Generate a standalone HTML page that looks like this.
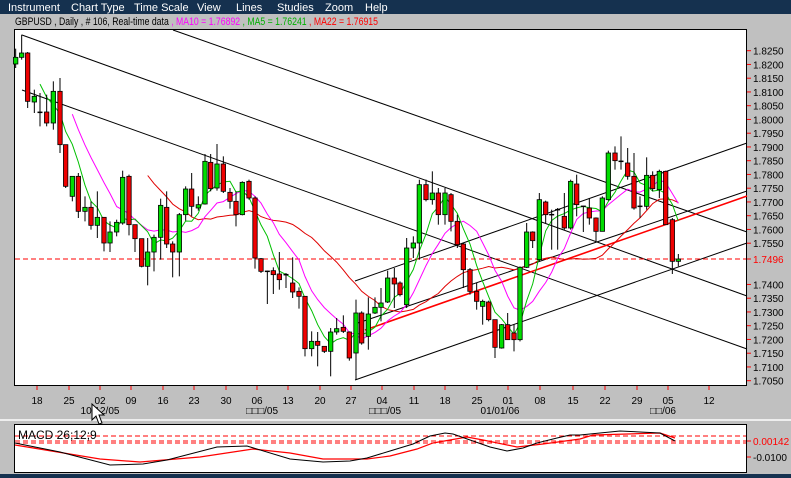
<!DOCTYPE html>
<html><head><meta charset="utf-8"><style>
body{margin:0;width:791px;height:478px;overflow:hidden;background:#c0c0c0;}
svg{display:block}
text{font-family:"Liberation Sans",sans-serif;}
</style></head><body>
<svg id="s" width="791" height="478" xmlns="http://www.w3.org/2000/svg">
<rect x="0" y="0" width="791" height="14" fill="#15314f"/>
<g fill="#fff" font-size="11">
<text x="8" y="11">Instrument</text><text x="71" y="11">Chart Type</text><text x="134" y="11">Time Scale</text><text x="197" y="11">View</text><text x="236" y="11">Lines</text><text x="277" y="11">Studies</text><text x="325" y="11">Zoom</text><text x="365" y="11">Help</text>
</g>
<text x="15" y="25" font-size="11" textLength="363" lengthAdjust="spacingAndGlyphs"><tspan fill="#000">GBPUSD , Daily , # 106, Real-time data </tspan><tspan fill="#ff00ff">, MA10 = 1.76892 </tspan><tspan fill="#00b000">, MA5 = 1.76241 </tspan><tspan fill="#ff0000">, MA22 = 1.76915</tspan></text>
<rect x="14.5" y="29.5" width="732" height="356" fill="#fff" stroke="#000"/>
<g id="ax" font-size="10" fill="#000"></g>
<rect x="0" y="419" width="791" height="2" fill="#eee"/>
<rect x="14.5" y="424.5" width="732" height="48" fill="#fff" stroke="#000"/>
<rect x="0" y="474" width="791" height="4" fill="#15314f"/>
<g id="ch"></g>
<g id="macd"></g>
<path d="M92 404 L92 420 L96 416 L99 424 L102 423 L99 415 L104 415 Z" fill="#fff" stroke="#000" stroke-width="1"/>
</svg>
<script>
var NS="http://www.w3.org/2000/svg";
function el(p,t,a,txt){var e=document.createElementNS(NS,t);for(var k in a)e.setAttribute(k,a[k]);if(txt!=null)e.textContent=txt;document.getElementById(p).appendChild(e);return e;}
var labs=["1.8250","1.8200","1.8150","1.8100","1.8050","1.8000","1.7950","1.7900","1.7850","1.7800","1.7750","1.7700","1.7650","1.7600","1.7550"];
for(var i=0;i<labs.length;i++){var y=50.7+i*13.75;el("ax","line",{x1:747,x2:751,y1:y,y2:y,stroke:"#f00"});el("ax","text",{x:753,y:y+4},labs[i]);}
var low=["1.7400","1.7350","1.7300","1.7250","1.7200","1.7150","1.7100","1.7050"];
for(var i=0;i<low.length;i++){var y=50.7+(i+17)*13.75;el("ax","line",{x1:747,x2:751,y1:y,y2:y,stroke:"#f00"});el("ax","text",{x:753,y:y+4},low[i]);}
el("ax","line",{x1:747,x2:751,y1:259,y2:259,stroke:"#f00"});
el("ax","text",{x:753,y:263,fill:"#f00"},"1.7496");
var xs=[[37,"18"],[69,"25"],[100,"02"],[131,"09"],[163,"16"],[194,"23"],[226,"30"],[257,"06"],[288,"13"],[320,"20"],[351,"27"],[382,"04"],[414,"11"],[445,"18"],[477,"25"],[508,"01"],[540,"08"],[573,"15"],[605,"22"],[637,"29"],[668,"05"],[709,"12"]];
xs.forEach(function(a){el("ax","line",{x1:a[0],x2:a[0],y1:386,y2:390,stroke:"#f00"});el("ax","text",{x:a[0],y:404,"text-anchor":"middle"},a[1]);});
[[100,"10/12/05"],[262,"□□□/05"],[385,"□□□/05"],[500,"01/01/06"],[663,"□□/06"]].forEach(function(a){el("ax","text",{x:a[0],y:414,"text-anchor":"middle"},a[1]);});
el("ax","text",{x:753,y:445,fill:"#f00"},"0.00142");
el("ax","line",{x1:747,x2:751,y1:441,y2:441,stroke:"#f00"});
el("ax","text",{x:753,y:461},"-0.0100");
el("ax","line",{x1:747,x2:751,y1:457,y2:457,stroke:"#f00"});
var L=[[173,30,747,232,"#000"],[22,35,747,296,"#000"],[22,90,747,349,"#000"],[355,380,747,243,"#000"],[355,281,747,143,"#000"],[355,324,747,191,"#000"]];
L.forEach(function(l){el("ch","line",{x1:l[0],y1:l[1],x2:l[2],y2:l[3],stroke:l[4],"stroke-width":1});});
el("ch","line",{x1:365,y1:330,x2:747,y2:196,stroke:"#f00","stroke-width":1.6});
el("ch","line",{x1:15,y1:259,x2:746,y2:259,stroke:"#f00","stroke-dasharray":"5,3"});
var A=[[47,88,108,62,120,"g"],[65,75,88,20,95,"g"],[83,75,220,72,240,"r"],[103,205,222,185,255,"g"],[120,252,254,195,295,"d"],[140,252,285,200,295,"r"],[160,190,285,160,305,"g"],[180,190,350,150,375,"r"],[197,350,475,350,480,"r"],[217,445,505,445,520,"g"],[235,445,550,435,570,"r"],[255,538,550,505,580,"g"],[273,538,592,520,605,"r"],[292,568,592,490,630,"g"],[312,568,645,568,670,"r"],[330,612,645,580,672,"g"],[350,583,612,575,625,"g"],[368,448,585,428,590,"g"],[387,445,590,440,622,"r"],[405,590,632,590,672,"r"],[425,632,715,632,718,"r"],[443,672,715,630,772,"g"],[462,628,672,620,730,"g"],[482,532,628,512,695,"g"],[500,538,648,490,660,"r"],[518,648,672,640,748,"r"],[538,560,672,555,745,"g"],[557,483,560,475,578,"g"],[575,483,535,435,565,"r"],[595,530,540,505,548,"g"],[615,400,528,378,530,"g"],[632,403,482,378,490,"r"],[651,408,480,348,488,"g"],[670,408,490,385,495,"r"],[690,493,520,480,542,"r"],[708,520,560,490,595,"r"],[727,463,560,460,562,"g"],[747,460,510,455,515,"r"],[765,510,690,505,722,"r"],[783,692,730,690,735,"r"],[802,729,731,728,828,"d"],[820,728,740,718,798,"r"],[838,738,755,672,785,"r"],[858,739,741,735,780,"d"],[878,765,792,688,810,"r"],[897,790,805,778,842,"r"],[915,805,962,805,985,"r"],[935,940,962,910,985,"g"],[953,940,952,912,1015,"r"],[973,955,970,955,975,"r"],[992,912,970,900,1045,"g"],[1010,902,912,870,920,"g"],[1030,898,910,862,915,"r"],[1048,912,990,910,998,"r"],[1068,855,975,815,1055,"g"],[1085,855,945,850,950,"r"],[1105,858,925,808,965,"g"],[1125,838,855,808,858,"g"],[1143,825,838,780,880,"g"],[1163,750,822,728,825,"g"],[1183,750,768,720,840,"r"]];
var C=[];
A.forEach(function(a){C.push([a[0]/3,a[1]/3+28,a[2]/3+28,a[3]/3+28,a[4]/3+28,a[5]]);});
var B=[[0,765,800,760,805,"r"],[20,660,830,630,840,"g"],[40,645,660,625,690,"g"],[58,470,645,455,695,"g"],[78,470,515,455,520,"r"],[97,495,515,430,530,"g"],[115,495,560,480,590,"r"],[135,495,560,480,590,"g"],[153,500,580,495,610,"r"],[172,580,650,560,660,"r"],[190,648,725,645,780,"r"],[210,725,790,720,800,"r"],[230,790,820,765,845,"r"],[248,820,835,815,890,"g"],[266,822,875,818,880,"r"],[285,875,958,875,990,"r"],[305,890,960,888,962,"g"],[323,890,935,855,935,"r"],[342,915,935,888,970,"r"],[360,718,935,715,940,"g"],[380,612,718,585,720,"g"],[398,612,638,610,660,"r"],[418,515,695,495,700,"g"],[437,522,560,518,585,"r"],[455,558,562,545,665,"d"],[473,543,547,540,665,"d"],[493,565,600,495,605,"r"],[512,460,600,455,605,"g"],[530,468,530,440,565,"r"],[550,533,537,535,612,"d"],[568,540,570,510,590,"r"],[588,570,610,568,640,"r"],[607,510,610,505,610,"g"],[625,375,515,368,518,"g"],[645,375,398,355,425,"r"],[663,398,402,325,425,"d"],[683,405,445,360,455,"r"],[702,445,540,375,545,"r"],[720,533,537,505,570,"d"],[740,442,535,388,545,"g"],[758,442,482,430,490,"r"],[778,430,485,425,510,"g"],[797,430,590,428,590,"r"],[817,575,700,570,738,"r"],[835,693,700,678,715,"g"]];
B.forEach(function(a){C.push([a[0]/3+400,a[1]/3+28,a[2]/3+28,a[3]/3+28,a[4]/3+28,a[5]]);});
C.sort(function(a,b){return a[0]-b[0];});
var cl=C.map(function(c){return c[5]=="g"?c[1]:c[2];});
function ma(n,col,st){var pts=[];for(var i=n-1;i<C.length;i++){var s=0;for(var j=i-n+1;j<=i;j++)s+=cl[j];pts.push(C[i][0].toFixed(1)+","+(s/n).toFixed(1));}el("ch","polyline",{points:pts.join(" "),fill:"none",stroke:col,"stroke-width":st});}
ma(22,"#e00000",1);ma(10,"#ff00ff",1);ma(5,"#00c000",1);
C.forEach(function(c){var x=c[0];el("ch","line",{x1:x,x2:x,y1:c[3],y2:c[4],stroke:"#000"});
 if(c[5]=="d"){el("ch","line",{x1:x-2.5,x2:x+2.5,y1:(c[1]+c[2])/2,y2:(c[1]+c[2])/2,stroke:"#000","stroke-width":1.5});}
 else el("ch","rect",{x:x-2.2,y:c[1],width:4.4,height:Math.max(1.5,c[2]-c[1]),fill:c[5]=="g"?"#00dd00":"#ee0000",stroke:"#000","stroke-width":0.8});});
[436,441,443].forEach(function(y){el("macd","line",{x1:15,x2:746,y1:y,y2:y,stroke:"#f00","stroke-dasharray":"5,3"});});
el("macd","polyline",{points:"15,445 100,459 140,462 200,457 253,449 290,453 323,459 367,459 390,456 417,449 433,443 467,437 483,440 517,447 543,444 580,439 593,435 660,433 675,438",fill:"none",stroke:"#f00","stroke-width":1.2});
el("macd","polyline",{points:"15,443 60,452 110,465 143,464 167,460 217,447 247,446 290,459 323,462 350,461 367,458 390,451 413,444 430,436 445,433 453,434 490,447 507,451 523,448 537,443 557,438 570,435 580,435 620,431 660,433 675,441",fill:"none",stroke:"#000","stroke-width":1});
el("macd","text",{x:18,y:439,"font-size":"12"},"MACD 26;12;9");
</script>
</body></html>
